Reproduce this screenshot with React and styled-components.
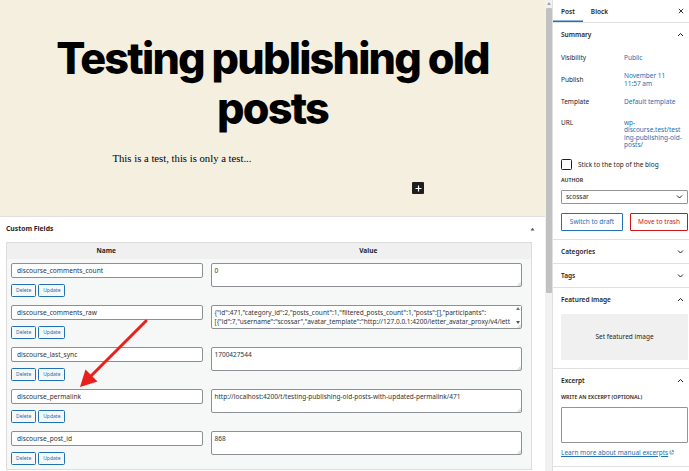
import React from 'react';
import styled, { createGlobalStyle } from 'styled-components';

const Global = createGlobalStyle`
  html, body { margin: 0; padding: 0; background: #fff; }
  body { width: 689px; height: 471px; overflow: hidden; font-family: "Noto Sans", "Open Sans", sans-serif; color: #1e1e1e; }
  * { box-sizing: border-box; }
`;

const Layout = styled.div`
  position: relative;
  display: flex;
  width: 689px;
  height: 471px;
  overflow: hidden;
  background: #fff;
`;

const Main = styled.div`
  width: 545px;
  flex: none;
  display: flex;
  flex-direction: column;
  overflow: hidden;
`;

const Canvas = styled.div`
  height: 216px;
  flex: none;
  background: #f5efe0;
  padding-top: 33px;
  display: flex;
  flex-direction: column;
  align-items: center;
`;

const Title = styled.h1`
  margin: 0;
  width: 460px;
  font-family: Inter, "Noto Sans", sans-serif;
  font-weight: 800;
  font-size: 43.2px;
  line-height: 50px;
  letter-spacing: -0.0415em;
  text-align: center;
  color: #000;
`;

const Paragraph = styled.p`
  margin: 18px 0 0;
  width: 320px;
  font-family: "Liberation Serif", serif;
  font-size: 10.7px;
  line-height: 14px;
  color: #000;
`;

const InserterRow = styled.div`
  width: 320px;
  margin-top: 17px;
  display: flex;
  justify-content: flex-end;
  padding-right: 8.5px;
`;

const PlusButton = styled.button`
  width: 12px;
  height: 12px;
  padding: 0;
  border: none;
  border-radius: 1px;
  background: #1e1e1e;
  display: flex;
  align-items: center;
  justify-content: center;
`;

const MetaBoxes = styled.div`
  flex: 1;
  background: #fff;
  border-top: 1px solid #e0e0e0;
  display: flex;
  flex-direction: column;
`;

const MetaHeader = styled.div`
  height: 23px;
  flex: none;
  display: flex;
  align-items: center;
  justify-content: space-between;
  padding: 0 10px 0 6px;
`;

const MetaTitle = styled.h2`
  margin: 0;
  font-size: 6.8px;
  font-weight: 700;
  color: #1d2327;
`;

const FieldTable = styled.table`
  margin: 2px 13px 0 6px;
  width: 526px;
  border-collapse: collapse;
  background: #f6f7f7;
  border: 1px solid #dcdcde;
  table-layout: fixed;
`;

const HeadCell = styled.th`
  height: 16px;
  padding: 0;
  background: #f0f0f1;
  font-size: 6.5px;
  font-weight: 700;
  color: #1d2327;
  text-align: center;
  width: ${p => p.$w || 'auto'};
`;

const Cell = styled.td`
  vertical-align: top;
  padding: ${p => (p.$value ? '4px 9px 4px 5px' : '4px 3px 4px 4px')};
`;

const NameInput = styled.input`
  display: block;
  width: 100%;
  height: 15px;
  margin: 0;
  padding: 0 5px;
  border: 1px solid #8c8f94;
  border-radius: 2px;
  background: #fff;
  font-family: "Noto Sans", sans-serif;
  font-size: 6.6px;
  color: #2c3338;
  outline: none;
`;

const ButtonRow = styled.div`
  display: flex;
  gap: 2px;
  margin-top: 6px;
`;

const SmallButton = styled.button`
  height: 13px;
  padding: 0 4px;
  border: 1px solid #2271b1;
  border-radius: 1.5px;
  background: #f6f7f7;
  color: #2271b1;
  font-family: "Noto Sans", sans-serif;
  font-size: 5px;
  line-height: 11px;
`;

const ValueBox = styled.div`
  position: relative;
  width: 100%;
  height: 24px;
`;

const ValueArea = styled.textarea`
  display: block;
  width: 100%;
  height: 24px;
  margin: 0;
  padding: 2px ${p => (p.$scroll ? '9px' : '3px')} 0 3px;
  border: 1px solid #8c8f94;
  border-radius: 2px;
  background: #fff;
  font-family: "Noto Sans", sans-serif;
  font-size: 6.5px;
  line-height: 9px;
  color: #2c3338;
  resize: none;
  overflow: hidden;
  outline: none;
`;

const Grip = styled.svg`
  position: absolute;
  right: 1px;
  bottom: 1px;
`;

const FakeScroll = styled.div`
  position: absolute;
  top: 1px;
  right: 1px;
  width: 6px;
  bottom: 5px;
  background: #fff;
  display: flex;
  flex-direction: column;
  align-items: center;
  justify-content: space-between;
  padding-top: 1px;
`;

const ScrollBar = styled.div`
  width: 7px;
  flex: none;
  background: #f1f1f1;
  display: flex;
  flex-direction: column;
  align-items: center;
  padding-top: 2px;
`;

const ScrollThumb = styled.div`
  margin-top: 3px;
  width: 6px;
  height: 285px;
  border-radius: 1px;
  background: #c1c1c1;
`;

const Sidebar = styled.aside`
  width: 137px;
  flex: none;
  border-left: 1px solid #e0e0e0;
  display: flex;
  flex-direction: column;
  font-size: 6.5px;
  color: #1e1e1e;
`;

const TabBar = styled.div`
  height: 23px;
  flex: none;
  display: flex;
  align-items: stretch;
  border-bottom: 1px solid #e0e0e0;
`;

const Tab = styled.div`
  display: flex;
  align-items: center;
  padding: 0 8px;
  font-weight: 600;
  font-size: 6.5px;
  box-shadow: ${p => (p.$active ? 'inset 0 -1.5px 0 #2271b1' : 'none')};
`;

const CloseBtn = styled.div`
  margin-left: auto;
  padding-right: 5px;
  display: flex;
  align-items: center;
`;

const Panel = styled.section`
  flex: none;
  border-bottom: 1px solid #e0e0e0;
  display: flex;
  flex-direction: column;
  padding-bottom: ${p => p.$pb ?? 0}px;
`;

const PanelHeader = styled.div`
  height: 23px;
  flex: none;
  display: flex;
  align-items: center;
  justify-content: space-between;
  padding: 0 5px 0 8px;
  font-weight: 600;
  font-size: 6.5px;
`;

const PanelBody = styled.div`
  padding: 0 1px 0 8px;
  display: flex;
  flex-direction: column;
`;

const Row = styled.div`
  display: flex;
  align-items: ${p => (p.$top ? 'flex-start' : 'center')};
  min-height: 16px;
  margin-top: ${p => p.$mt}px;
  line-height: ${p => (p.$top ? '7.6px' : '16px')};
`;

const RowLabel = styled.div`
  width: 63px;
  flex: none;
`;

const RowValue = styled.div`
  color: #2271b1;
  line-height: ${p => p.$lh || 7.8}px;
`;

const CheckRow = styled.label`
  display: flex;
  align-items: center;
  gap: 6px;
  margin-top: 10px;
  height: 11px;
`;

const CheckBox = styled.span`
  width: 11px;
  height: 11px;
  border: 1px solid #1e1e1e;
  border-radius: 1.5px;
  background: #fff;
`;

const SmallCaps = styled.div`
  margin-top: ${p => p.$mt}px;
  font-size: 5.3px;
  font-weight: 600;
  line-height: 7px;
  text-transform: uppercase;
  color: #1e1e1e;
`;

const SelectBox = styled.div`
  margin-top: 5.5px;
  width: 127px;
  height: 14px;
  border: 1px solid #949494;
  border-radius: 1px;
  display: flex;
  align-items: center;
  justify-content: space-between;
  padding: 0 4px 0 4px;
  font-size: 6.5px;
`;

const ActionRow = styled.div`
  margin-top: 9px;
  display: flex;
  gap: 7px;
`;

const OutlineButton = styled.button`
  height: 18px;
  width: ${p => p.$w}px;
  padding: 0;
  background: #fff;
  border: 1px solid ${p => p.$color};
  border-radius: 1px;
  color: ${p => p.$color};
  font-family: "Noto Sans", sans-serif;
  font-size: 6.5px;
`;

const FeaturedBox = styled.div`
  margin-top: 3px;
  width: 127px;
  height: 46px;
  background: #f0f0f0;
  border-radius: 1px;
  display: flex;
  align-items: center;
  justify-content: center;
  font-size: 6.5px;
`;

const ExcerptArea = styled.textarea`
  display: block;
  margin: 5.5px 0 0;
  width: 127px;
  height: 36px;
  border: 1px solid #949494;
  border-radius: 1px;
  resize: none;
  background: #fff;
`;

const LearnLink = styled.a`
  margin-top: 6px;
  display: flex;
  align-items: center;
  gap: 1px;
  line-height: 8px;
  color: #2271b1;
  text-decoration: underline;
  font-size: 6.5px;
`;

const AnnotationLayer = styled.svg`
  position: absolute;
  left: 0;
  top: 0;
  pointer-events: none;
`;

const Chevron = ({ up }) => (
  <svg width="7" height="5" viewBox="0 0 7 5">
    <path d={up ? 'M1 4 L3.5 1.5 L6 4' : 'M1 1.5 L3.5 4 L6 1.5'} fill="none" stroke="#1e1e1e" strokeWidth="1" />
  </svg>
);

const fields = [
  { name: 'discourse_comments_count', value: '0' },
  {
    name: 'discourse_comments_raw',
    value:
      '{"id":471,"category_id":2,"posts_count":1,"filtered_posts_count":1,"posts":[],"participants":[{"id":7,"username":"scossar","avatar_template":"http://127.0.0.1:4200/letter_avatar_proxy/v4/letter/s/8c91f0/{size}.png"}]}',
    scroll: true,
  },
  { name: 'discourse_last_sync', value: '1700427544' },
  { name: 'discourse_permalink', value: 'http://localhost:4200/t/testing-publishing-old-posts-with-updated-permalink/471' },
  { name: 'discourse_post_id', value: '868' },
];

export default function App() {
  return (
    <>
      <Global />
      <Layout>
        <Main>
          <Canvas>
            <Title>Testing publishing old posts</Title>
            <Paragraph>This is a test, this is only a test...</Paragraph>
            <InserterRow>
              <PlusButton aria-label="Add block">
                <svg width="7" height="7" viewBox="0 0 7 7">
                  <path d="M3.5 0.5 V6.5 M0.5 3.5 H6.5" stroke="#fff" strokeWidth="1.2" />
                </svg>
              </PlusButton>
            </InserterRow>
          </Canvas>
          <MetaBoxes>
            <MetaHeader>
              <MetaTitle>Custom Fields</MetaTitle>
              <svg width="5" height="4" viewBox="0 0 5 4">
                <path d="M0.5 3.5 L2.5 0.8 L4.5 3.5 Z" fill="#50575e" />
              </svg>
            </MetaHeader>
            <FieldTable>
              <thead>
                <tr>
                  <HeadCell $w="199px">Name</HeadCell>
                  <HeadCell>Value</HeadCell>
                </tr>
              </thead>
              <tbody>
                {fields.map(f => (
                  <tr key={f.name}>
                    <Cell>
                      <NameInput readOnly value={f.name} />
                      <ButtonRow>
                        <SmallButton>Delete</SmallButton>
                        <SmallButton>Update</SmallButton>
                      </ButtonRow>
                    </Cell>
                    <Cell $value>
                      <ValueBox>
                        <ValueArea readOnly value={f.value} $scroll={f.scroll} />
                        {f.scroll && (
                          <FakeScroll>
                            <svg width="4" height="3" viewBox="0 0 4 3"><path d="M0 3 L2 0 L4 3Z" fill="#777" /></svg>
                            <svg width="4" height="3" viewBox="0 0 4 3"><path d="M0 0 L2 3 L4 0Z" fill="#555" /></svg>
                          </FakeScroll>
                        )}
                        <Grip width="4" height="4" viewBox="0 0 4 4">
                          <path d="M0.5 3.8 L3.8 0.5 M2.2 3.8 L3.8 2.2" stroke="#a0a0a0" strokeWidth="0.6" />
                        </Grip>
                      </ValueBox>
                    </Cell>
                  </tr>
                ))}
              </tbody>
            </FieldTable>
          </MetaBoxes>
        </Main>
        <ScrollBar>
          <svg width="4" height="3" viewBox="0 0 4 3"><path d="M0 3 L2 0 L4 3Z" fill="#a3a3a3" /></svg>
          <ScrollThumb />
        </ScrollBar>
        <Sidebar>
          <TabBar>
            <Tab $active>Post</Tab>
            <Tab>Block</Tab>
            <CloseBtn>
              <svg width="6" height="6" viewBox="0 0 6 6">
                <path d="M0.8 0.8 L5.2 5.2 M5.2 0.8 L0.8 5.2" stroke="#1e1e1e" strokeWidth="0.9" />
              </svg>
            </CloseBtn>
          </TabBar>
          <Panel $pb={8}>
            <PanelHeader>
              <span>Summary</span>
              <Chevron up />
            </PanelHeader>
            <PanelBody>
              <Row $mt={4}>
                <RowLabel>Visibility</RowLabel>
                <RowValue>Public</RowValue>
              </Row>
              <Row $mt={6}>
                <RowLabel>Publish</RowLabel>
                <RowValue>November 11<br />11:57 am</RowValue>
              </Row>
              <Row $mt={6}>
                <RowLabel>Template</RowLabel>
                <RowValue>Default template</RowValue>
              </Row>
              <Row $mt={8.5} $top>
                <RowLabel>URL</RowLabel>
                <RowValue $lh={7.6}>wp-<br />discourse.test/test<br />ing-publishing-old-<br />posts/</RowValue>
              </Row>
              <CheckRow>
                <CheckBox />
                <span>Stick to the top of the blog</span>
              </CheckRow>
              <SmallCaps $mt={7.5}>Author</SmallCaps>
              <SelectBox>
                <span>scossar</span>
                <Chevron />
              </SelectBox>
              <ActionRow>
                <OutlineButton $w={62} $color="#2271b1">Switch to draft</OutlineButton>
                <OutlineButton $w={58} $color="#cc1818">Move to trash</OutlineButton>
              </ActionRow>
            </PanelBody>
          </Panel>
          <Panel>
            <PanelHeader>
              <span>Categories</span>
              <Chevron />
            </PanelHeader>
          </Panel>
          <Panel>
            <PanelHeader>
              <span>Tags</span>
              <Chevron />
            </PanelHeader>
          </Panel>
          <Panel $pb={8}>
            <PanelHeader>
              <span>Featured image</span>
              <Chevron up />
            </PanelHeader>
            <PanelBody>
              <FeaturedBox>Set featured image</FeaturedBox>
            </PanelBody>
          </Panel>
          <Panel $pb={9}>
            <PanelHeader>
              <span>Excerpt</span>
              <Chevron up />
            </PanelHeader>
            <PanelBody>
              <SmallCaps $mt={2.5}>Write an excerpt (optional)</SmallCaps>
              <ExcerptArea />
              <LearnLink href="#">
                Learn more about manual excerpts
                <svg width="5" height="5" viewBox="0 0 5 5">
                  <path d="M2 1 H1 V4 H4 V3 M2.6 0.6 H4.4 V2.4 M4.4 0.6 L2.3 2.7" fill="none" stroke="#2271b1" strokeWidth="0.6" />
                </svg>
              </LearnLink>
            </PanelBody>
          </Panel>
        </Sidebar>
        <AnnotationLayer width="689" height="471" viewBox="0 0 689 471">
          <line x1="146" y1="321" x2="90" y2="377" stroke="#e8201c" strokeWidth="3" strokeLinecap="round" />
          <polygon points="80,387 85.5,369.5 97.5,381.5" fill="#e8201c" />
        </AnnotationLayer>
      </Layout>
    </>
  );
}
